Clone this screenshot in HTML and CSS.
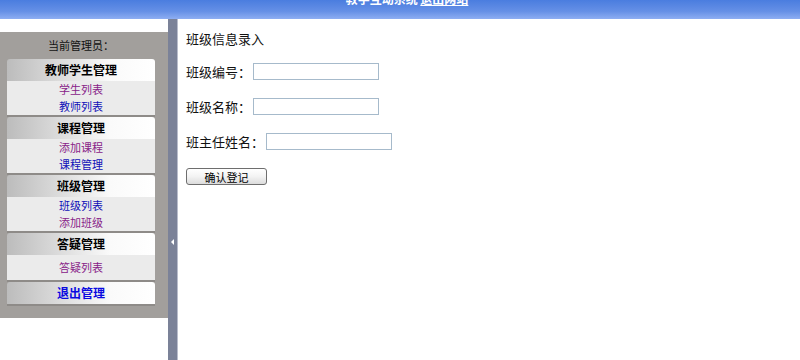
FILE: index.html
```html
<!DOCTYPE html>
<html lang="zh-CN">
<head>
    <meta charset="UTF-8">
    <title>班级信息录入</title>
    <link rel="stylesheet" href="styles.css">
</head>
<body>
  <div class="top">
    <div class="top-text"><b>教学互动系统</b> <a href="#">退出网站</a></div>
  </div>
  <div class="frame">
    <div class="side">
      <div class="panel">
        <p class="admin">当前管理员：</p>
        <div class="menu">
          <div class="menu-head">教师学生管理</div>
          <div class="menu-body">
            <a href="#" class="visited">学生列表</a>
            <a href="#">教师列表</a>
          </div>
        </div>
        <div class="menu">
          <div class="menu-head">课程管理</div>
          <div class="menu-body">
            <a href="#" class="visited">添加课程</a>
            <a href="#">课程管理</a>
          </div>
        </div>
        <div class="menu">
          <div class="menu-head">班级管理</div>
          <div class="menu-body">
            <a href="#">班级列表</a>
            <a href="#" class="visited">添加班级</a>
          </div>
        </div>
        <div class="menu">
          <div class="menu-head">答疑管理</div>
          <div class="menu-body single">
            <a href="#" class="visited">答疑列表</a>
          </div>
        </div>
        <div class="menu">
          <div class="menu-head"><a href="#" class="logout">退出管理</a></div>
        </div>
      </div>
    </div>
    <div class="splitter"><span class="arrow"></span></div>
    <div class="main">
      <h1>班级信息录入</h1>
      <form class="form">
        <label class="row">班级编号：<input type="text"></label>
        <label class="row">班级名称：<input type="text"></label>
        <label class="row">班主任姓名：<input type="text"></label>
        <div class="row"><button type="button" class="btn">确认登记</button></div>
      </form>
    </div>
  </div>
</body>
</html>
```

FILE: styles.css
```css
*{
    margin: 0;
    padding: 0;
    box-sizing: border-box;
}
body{
    font-family: "Noto Sans CJK SC", "DejaVu Sans", sans-serif;
    background: #fff;
    height: 360px;
    overflow: hidden;
}
.top{
    height: 19px;
    overflow: hidden;
    background: linear-gradient(#4a7ddf, #6690e6 60%, #8eaef2);
    text-align: center;
}
.top-text{
    margin-top: -9px;
    font-size: 12px;
    line-height: 16px;
    color: #fff;
    padding-left: 14px;
}
.top-text a{
    color: #fff;
    font-weight: bold;
}
.frame{
    display: flex;
    height: 341px;
}
.side{
    width: 168px;
    padding-top: 13px;
}
.panel{
    background: #a29f9c;
    height: 286px;
    padding: 0 13px 0 7px;
}
.admin{
    font-size: 11px;
    line-height: 27px;
    text-align: center;
    color: #111;
}
.menu{
    border-bottom: 2px solid #8e8b88;
}
.menu-head{
    height: 22px;
    line-height: 22px;
    text-align: center;
    font-size: 12px;
    font-weight: bold;
    color: #000;
    border-radius: 3px 3px 0 0;
    background: linear-gradient(to right, #bcbcbc, #e4e4e4 45%, #fafafa 70%, #fff);
}
.menu-body{
    background: #ebebeb;
    display: flex;
    flex-direction: column;
    align-items: center;
}
.menu-body.single{
    padding: 4px 0;
}
.menu-body a{
    font-size: 11px;
    line-height: 17px;
    color: #1010b8;
    text-decoration: none;
}
.menu-body a.visited{
    color: #882288;
}
.menu-head .logout{
    color: #0a0ae0;
    text-decoration: none;
}
.splitter{
    width: 10px;
    background: #7b8298;
    border-right: 1px solid #b9bdcc;
    display: flex;
    align-items: center;
    justify-content: center;
    padding-top: 105px;
}
.arrow{
    width: 0;
    height: 0;
    border-top: 3px solid transparent;
    border-bottom: 3px solid transparent;
    border-right: 3px solid #fff;
}
.main{
    flex: 1;
    padding: 11px 8px;
    color: #111;
}
.main h1{
    font-size: 13px;
    font-weight: normal;
    line-height: 18px;
}
.form{
    display: flex;
    flex-direction: column;
    gap: 18px;
    margin-top: 15px;
}
.row{
    display: flex;
    align-items: center;
    height: 17px;
    font-size: 13px;
}
.row input{
    width: 126px;
    height: 17px;
    margin-left: 2px;
    border: 1px solid #a6bacb;
    background: #fff;
}
.btn{
    width: 81px;
    height: 17px;
    font-family: inherit;
    font-size: 11px;
    line-height: 14px;
    color: #000;
    border: 1px solid #6e6e6e;
    border-radius: 3px;
    background: linear-gradient(#fff, #f3f3f3 50%, #dcdcdc);
}
```
